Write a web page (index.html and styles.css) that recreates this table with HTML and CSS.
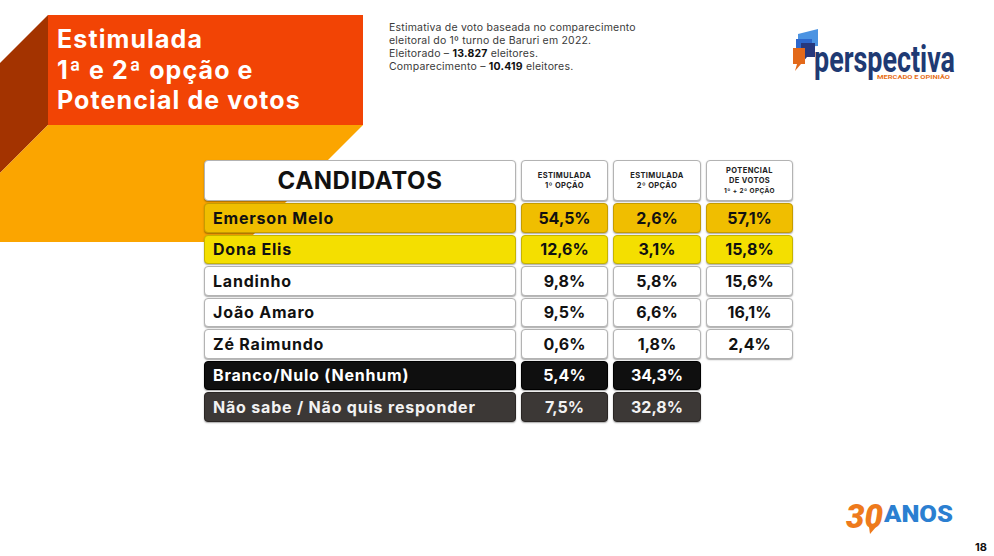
FILE: index.html
```html
<!DOCTYPE html>
<html lang="pt-BR">
<head>
<meta charset="utf-8">
<title>Estimulada 1ª e 2ª opção</title>
<link rel="stylesheet" href="styles.css">
</head>
<body>
<div class="page">
  <svg class="deco" width="380" height="250" viewBox="0 0 380 250">
    <polygon points="48,15 48,125 0,173 0,63" fill="#a33300"/>
    <polygon points="48,125 363,125 246,242 0,242 0,173" fill="#fba500"/>
  </svg>

  <header class="top">
    <h1 class="title">Estimulada<br>1ª e 2ª opção e<br>Potencial de votos</h1>
    <div class="notes">
      <p>Estimativa de voto baseada no comparecimento</p>
      <p>eleitoral do 1º turno de Baruri em 2022.</p>
      <p>Eleitorado – <b>13.827</b> eleitores.</p>
      <p>Comparecimento – <b>10.419</b> eleitores.</p>
    </div>
    <svg class="logo" width="172" height="62" viewBox="0 0 172 62">
      <polygon points="8,7 28,2 28,19 8,20" fill="#4b93e2"/>
      <polygon points="6,12 22,12 22,24 6,24" fill="#2d67cc"/>
      <path d="M11 16 H25 V30 H17 L12 36 L13 30 H11 Z" fill="#27387d"/>
      <path d="M3 21 H15 V37 H11 L5 44 L7 37 H3 Z" fill="#e3691a"/>
      <text x="24" y="45" class="logo-word" textLength="141" lengthAdjust="spacingAndGlyphs">perspectiva</text>
      <text x="87" y="52" class="logo-sub" textLength="73" lengthAdjust="spacingAndGlyphs">MERCADO E OPINIÃO</text>
    </svg>
  </header>

  <div class="table">
    <div class="cell h-main">CANDIDATOS</div>
    <div class="cell h-sub"><span>ESTIMULADA</span><span>1º OPÇÃO</span></div>
    <div class="cell h-sub"><span>ESTIMULADA</span><span>2º OPÇÃO</span></div>
    <div class="cell h-sub"><span>POTENCIAL</span><span>DE VOTOS</span><span class="tiny">1º + 2º OPÇÃO</span></div>

    <div class="cell name gold">Emerson Melo</div>
    <div class="cell gold">54,5%</div>
    <div class="cell gold">2,6%</div>
    <div class="cell gold">57,1%</div>

    <div class="cell name yellow">Dona Elis</div>
    <div class="cell yellow">12,6%</div>
    <div class="cell yellow">3,1%</div>
    <div class="cell yellow">15,8%</div>

    <div class="cell name">Landinho</div>
    <div class="cell">9,8%</div>
    <div class="cell">5,8%</div>
    <div class="cell">15,6%</div>

    <div class="cell name">João Amaro</div>
    <div class="cell">9,5%</div>
    <div class="cell">6,6%</div>
    <div class="cell">16,1%</div>

    <div class="cell name">Zé Raimundo</div>
    <div class="cell">0,6%</div>
    <div class="cell">1,8%</div>
    <div class="cell">2,4%</div>

    <div class="cell name black">Branco/Nulo (Nenhum)</div>
    <div class="cell black">5,4%</div>
    <div class="cell black">34,3%</div>
    <div class="blank"></div>

    <div class="cell name dark">Não sabe / Não quis responder</div>
    <div class="cell dark">7,5%</div>
    <div class="cell dark">32,8%</div>
    <div class="blank"></div>
  </div>

  <footer class="foot">
    <svg class="anos" width="116" height="40" viewBox="0 0 116 40">
      <text x="3" y="31" class="anos-num" textLength="37" lengthAdjust="spacingAndGlyphs">30</text>
      <polygon points="26,30 33,30 27,37" fill="#ee7a1c"/>
      <text x="41" y="25" class="anos-word" textLength="69" lengthAdjust="spacingAndGlyphs">ANOS</text>
    </svg>
    <span class="pnum">18</span>
  </footer>
</div>
</body>
</html>
```

FILE: styles.css
```css
* { box-sizing: border-box; }

body {
  margin: 0;
  background: #ffffff;
  font-family: Inter, "DejaVu Sans", sans-serif;
}

.page {
  position: relative;
  width: 994px;
  height: 556px;
  overflow: hidden;
  display: flex;
  flex-direction: column;
}

.deco {
  position: absolute;
  left: 0;
  top: 0;
}

.top {
  position: relative;
  display: flex;
  align-items: flex-start;
  height: 125px;
  padding: 15px 0 0 48px;
}

.title {
  margin: 0;
  width: 315px;
  height: 110px;
  background: #f24405;
  color: #ffffff;
  font-size: 25px;
  font-weight: 700;
  line-height: 30.5px;
  letter-spacing: 1.1px;
  padding: 9px 0 0 9px;
}

.notes {
  margin: 6px 0 0 26px;
  font-size: 10.5px;
  line-height: 13px;
  letter-spacing: 0.2px;
  color: #3a3a3a;
}

.notes p { margin: 0; }
.notes b { color: #111111; }

.logo {
  margin: 12px 32px 0 auto;
  overflow: visible;
}

.logo-word {
  font-family: Roboto, "Liberation Sans", sans-serif;
  font-weight: 700;
  font-size: 36px;
  fill: #1f3a73;
}

.logo-sub {
  font-family: Roboto, "Liberation Sans", sans-serif;
  font-weight: 700;
  font-size: 5.5px;
  fill: #e8701a;
}

.table {
  position: relative;
  margin: 35px 0 0 204px;
  width: max-content;
  display: grid;
  grid-template-columns: 312px 87px 88px 87px;
  grid-template-rows: 41px;
  grid-auto-rows: 29.5px;
  column-gap: 5px;
  row-gap: 2px;
}

.cell {
  display: flex;
  align-items: center;
  justify-content: center;
  background: #ffffff;
  border: 1px solid #b3b3b3;
  border-radius: 4px;
  box-shadow: 0 1px 1.5px rgba(0, 0, 0, 0.35);
  font-size: 16px;
  font-weight: 700;
  color: #111111;
}

.name {
  justify-content: flex-start;
  padding-left: 8px;
  letter-spacing: 0.8px;
}

.h-main {
  font-size: 24px;
  letter-spacing: 0.6px;
}

.h-sub {
  flex-direction: column;
  font-size: 7.5px;
  line-height: 10px;
  letter-spacing: 0.4px;
  color: #222222;
  text-align: center;
}

.h-sub .tiny { font-size: 6.5px; }

.gold { background: #f0be00; border-color: #c59c00; }
.yellow { background: #f4df00; border-color: #c6b400; }
.black { background: #0f0f0f; border-color: #000000; color: #ffffff; }
.dark { background: #3c3836; border-color: #2a2624; color: #f2f2f2; }

.foot {
  margin-top: auto;
  display: flex;
  justify-content: flex-end;
  align-items: flex-end;
  padding-right: 7px;
}

.anos {
  margin: 0 16px 19px 0;
  overflow: visible;
}

.anos-num {
  font-family: Roboto, "Liberation Sans", sans-serif;
  font-weight: 900;
  font-style: italic;
  font-size: 34px;
  fill: #ee7a1c;
}

.anos-word {
  font-family: Roboto, "Liberation Sans", sans-serif;
  font-weight: 900;
  font-size: 24px;
  fill: #2b7fd1;
}

.pnum {
  font-size: 11px;
  font-weight: 700;
  line-height: 12px;
  margin-bottom: 3px;
  color: #111111;
}
```
